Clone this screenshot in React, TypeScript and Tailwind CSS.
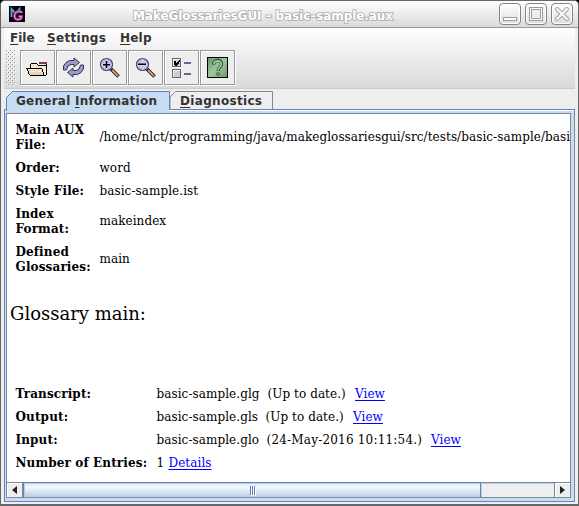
import type { ReactNode } from "react";

const SANS = "font-['DejaVu_Sans',sans-serif]";

function ToolButton({ children }: { children: ReactNode }) {
  return (
    <button className="flex h-[35px] w-[35px] shrink-0 items-center justify-center border border-[#999999] bg-[#eeeeee] pr-px pb-px shadow-[1px_1px_0_#ffffff,inset_1px_1px_0_#ffffff]">
      {children}
    </button>
  );
}

function FolderIcon() {
  return (
    <svg width="22" height="22" viewBox="0 -1 22 22" shapeRendering="crispEdges">
      <path d="M13 5h8v2h-8z" fill="#7a4242" />
      <path d="M4 7h7l2 1h7v10H5z" fill="#f7ead8" />
      <path d="M1 11h15l2 7H4z" fill="#ead2b4" />
      <path d="M2 12h14v1H3zM4 14h12v1H4z" fill="#fbf0de" />
      <path d="M5 6h6v1H5zM4 7h1v4H4zM11 7h1v1h-1zM12 8h8v1h-8zM0 11h16v1H0zM1 12h1v2H1zM2 14h1v3H2zM3 17h1v1H3zM4 18h16v1H4zM16 12h1v3h-1zM17 15h1v3h-1zM20 7h1v11h-1z" fill="#000" />
    </svg>
  );
}

function RefreshIcon() {
  return (
    <svg width="22" height="22" viewBox="0 0 22 22">
      <path d="M1.500 14V10L4 6.500L7.500 4.500H12V2L17.500 6.500L12 11V8.500H9L6 10L4.500 14Z" fill="#9999cc" stroke="#26263c" strokeWidth=".9" />
      <path d="M21.500 9V13L19 16.500L15.500 18.500H11V21L5.500 16.500L11 12V14.500H14L17 13L18.500 9Z" fill="#9999cc" stroke="#26263c" strokeWidth=".9" />
    </svg>
  );
}

function MagnifierIcon({ plus = false }: { plus?: boolean }) {
  return (
    <svg width="22" height="22" viewBox="0 0 22 22">
      <path d="M13 13l7.500 7.500" stroke="#1a1a1a" strokeWidth="3.600" />
      <path d="M14 14l6 6" stroke="#d99a69" strokeWidth="1.800" />
      <circle cx="8.500" cy="8.500" r="6" fill="#ccccee" stroke="#46466e" strokeWidth="1.200" />
      <path d="M5 6h1v1H5zM6 4h1v1H6zM10 4h1v1h-1zM12 6h1v1h-1zM5 11h1v1H5zM7 12h1v1H7zM10 12h1v1h-1zM12 10h1v1h-1z" fill="#9a9ac8" />
      <path d={plus ? "M5 8h7v1.500H5zM7.750 5h1.500v7h-1.500z" : "M4 7.500h8V9H4z"} fill="#000" />
    </svg>
  );
}

function OptionsIcon() {
  return (
    <svg width="22" height="22" viewBox="-1 0 22 22" shapeRendering="crispEdges">
      <path d="M1.500 2.500h8v8h-8zM1.500 13.500h8v8h-8z" fill="#cccccc" stroke="#666666" />
      <path d="M2 3h7v1H2zM2 3h1v7H2zM2 14h7v1H2zM2 14h1v7H2zM10 3h1v9h-1zM2 11h9v1H2z" fill="#f5f5f5" />
      <path d="M3 5h2v2h1V6h1V5h1V4h1v2H8v2H7v1H6v1H4V9H3z" fill="#000" />
      <path d="M13 6h7v2h-7zM13 17h7v2h-7z" fill="#666699" />
    </svg>
  );
}

function HelpIcon() {
  return (
    <svg width="22" height="22" viewBox="0 0 22 22">
      <defs>
        <linearGradient id="helpFill" x1="0" y1="0" x2="1" y2="1">
          <stop offset="0" stopColor="#699369" />
          <stop offset=".5" stopColor="#9cc89c" />
          <stop offset="1" stopColor="#6d946d" />
        </linearGradient>
      </defs>
      <rect x="1.500" y="1.500" width="20" height="20" fill="url(#helpFill)" stroke="#000" />
      <path d="M7.500 8.500C7.500 3 15.500 3 15.500 8C15.500 11 12 10.500 12 15" fill="none" stroke="#254a2c" strokeWidth="3.200" />
      <path d="M7.800 8C8 3.800 15.300 3.800 15.300 8C15.300 11 12 10.500 12 14.500" fill="none" stroke="#a1cda1" strokeWidth="1.700" />
      <circle cx="12" cy="18" r="1.400" fill="#a1cda1" stroke="#254a2c" strokeWidth=".8" />
    </svg>
  );
}

function AppIcon() {
  return (
    <svg width="16" height="16" viewBox="0 0 16 16">
      <rect width="16" height="16" fill="#050108" />
      <path d="M2.500 11V3L6.500 7.500L10.500 3V7" fill="none" stroke="#57a9bd" strokeWidth="1.900" />
      <path d="M13 7C12 4.500 5.500 5 5.500 10C5.500 15 12.500 14.500 12.500 10.500H9.500" fill="none" stroke="#7b2c75" strokeWidth="3" />
      <path d="M13 7C12 4.500 5.500 5 5.500 10C5.500 15 12.500 14.500 12.500 10.500H9.500" fill="none" stroke="#e583da" strokeWidth="1.400" />
    </svg>
  );
}

function WindowButton({ children }: { children: ReactNode }) {
  return (
    <button className="h-[22px] w-[22px] rounded-[4px] border border-[#858585] bg-linear-to-b from-white to-[#dedede] shadow-[inset_0_0_0_1px_#ffffff]">
      <svg width="20" height="20" viewBox="0 0 20 20" fill="none" stroke="#9c9c9c">
        {children}
      </svg>
    </button>
  );
}

function Row({ label, children, wide = false, tall = false }: { label: ReactNode; children: ReactNode; wide?: boolean; tall?: boolean }) {
  return (
    <div className="flex items-center py-1 pl-[8.5px]">
      <div className={`shrink-0 font-bold tracking-[0.130px] ${wide ? "w-[141px]" : "w-[84px]"}`}>{label}</div>
      <div className={`flex ${tall ? "pb-[2px]" : ""}`}>{children}</div>
    </div>
  );
}

function Link({ children }: { children: string }) {
  return <a className="text-[#0000ff] underline decoration-1 underline-offset-[1.500px]">{children}</a>;
}

function Menu({ k, rest, className }: { k: string; rest: string; className: string }) {
  return (
    <span className={className}>
      <span className="underline decoration-1 underline-offset-2">{k}</span>
      {rest}
    </span>
  );
}

export default function App() {
  return (
    <div className="h-[506px] w-[579px] overflow-hidden bg-black">
      <div className="flex h-[506px] w-[579px] flex-col overflow-hidden rounded-t-[5px] border border-b-2 border-[#666666] bg-[#eeeeee]">
        <header className="flex h-[27px] shrink-0 items-center border-b border-[#999999] bg-linear-to-b from-white to-[#dadada] pr-[5px] pl-2">
          <AppIcon />
          <h1 className={`ml-[108px] pt-[3px] text-[12px] leading-[16px] font-bold tracking-[-0.080px] whitespace-nowrap text-white [-webkit-text-stroke:1.700px_#adadad] [paint-order:stroke_fill] ${SANS}`}>
            MakeGlossariesGUI – basic–sample.aux
          </h1>
          <div className="ml-auto flex gap-1">
            <WindowButton>
              <rect x="3.500" y="13.500" width="13" height="3" fill="#fff" />
            </WindowButton>
            <WindowButton>
              <rect x="3.500" y="3.500" width="13" height="13" fill="#fff" />
              <rect x="5.500" y="5.500" width="9" height="9" fill="#eee" />
            </WindowButton>
            <WindowButton>
              <path d="M5.200 5.200l9.600 9.600M14.800 5.200l-9.600 9.600" strokeWidth="4.200" strokeLinecap="round" />
              <path d="M5.200 5.200l9.600 9.600M14.800 5.200l-9.600 9.600" stroke="#f7f7f7" strokeWidth="2.400" strokeLinecap="round" />
            </WindowButton>
          </div>
        </header>

        <div className="mr-[3px] ml-[3px] h-[61px] shrink-0 border-b border-[#cccccc] bg-linear-to-b from-white to-[#dadada] to-[59px]">
          <nav className={`flex h-[22px] pt-[2px] pl-[6px] text-[12px] leading-[16px] font-bold text-[#333333] ${SANS}`}>
            <Menu k="F" rest="ile" className="w-[37px]" />
            <Menu k="S" rest="ettings" className="w-[73px] tracking-[0.320px]" />
            <Menu k="H" rest="elp" className="tracking-[0.200px]" />
          </nav>
          <div className="flex h-[37px] gap-px border-b border-[#dadada] pl-[2px]">
            <svg width="13" height="36" shapeRendering="crispEdges">
              <defs>
                <pattern id="grip" width="4" height="4" patternUnits="userSpaceOnUse">
                  <path d="M0 0h1v1H0zM2 2h1v1H2z" fill="#8a929b" />
                  <path d="M1 1h1v1H1zM3 3h1v1H3z" fill="#fff" />
                </pattern>
              </defs>
              <rect width="10" height="36" fill="url(#grip)" />
            </svg>
            <ToolButton><FolderIcon /></ToolButton>
            <ToolButton><RefreshIcon /></ToolButton>
            <ToolButton><MagnifierIcon plus /></ToolButton>
            <ToolButton><MagnifierIcon /></ToolButton>
            <ToolButton><OptionsIcon /></ToolButton>
            <ToolButton><HelpIcon /></ToolButton>
          </div>
        </div>

        <div className={`relative z-10 ml-[4px] flex h-[20px] shrink-0 items-end text-[12px] leading-[16px] font-bold text-[#333333] ${SANS}`}>
          <div className="relative h-[18px] w-[165px] pt-[2px] pl-[11px] tracking-[0.240px]">
            <svg width="165" height="20" className="absolute top-0 left-0 -z-10">
              <path d="M1.500 21V6.500L7.500 .5H164.500V18.500H163.500V21" fill="#c8ddf2" stroke="#6382bf" />
              <path d="M2 18h162v2H2z" fill="#c8ddf2" />
            </svg>
            General <Menu k="I" rest="nformation" className="" />
          </div>
          <div className="relative h-[18px] w-[103px] pt-[2px] pl-[10px] tracking-[0.320px]">
            <svg width="103" height="18" className="absolute top-0 left-0 -z-10">
              <path d="M0 19V6L5.500 .5H102.500V19" fill="#eeeeee" stroke="#7a8a99" />
            </svg>
            <Menu k="D" rest="iagnostics" className="" />
          </div>
        </div>

        <div className="mr-[3px] ml-[3px] flex h-[393px] shrink-0 flex-col border border-[#6382bf] border-r-[#7a8a99] bg-[#c8ddf2] pt-[3px] pr-[3px] pb-[3px] pl-px shadow-[inset_0_1px_0_#ffffff]">
          <main className="flex min-h-0 flex-1 flex-col overflow-hidden border border-[#7a8a99] bg-white font-['DejaVu_Serif',serif] text-[12px] leading-[15px] whitespace-nowrap text-black">
            <div className="h-[368px] shrink-0 pt-[5px] tracking-[0.070px]">
              <Row tall label={<>Main AUX<br />File:</>}>/home/nlct/programming/java/makeglossariesgui/src/tests/basic-sample/basi</Row>
              <Row label="Order:">word</Row>
              <Row label="Style File:">basic-sample.ist</Row>
              <Row tall label={<>Index<br />Format:</>}>makeindex</Row>
              <Row tall label={<>Defined<br />Glossaries:</>}>main</Row>
              <h2 className="mt-[23px] mb-[57px] pl-[3px] text-[18px] leading-[24px] tracking-[0px]">Glossary main:</h2>
              <Row wide label="Transcript:"><span className="w-[111px]">basic-sample.glg</span><span className="w-[87.5px]">(Up to date.)</span><Link>View</Link></Row>
              <Row wide label="Output:"><span className="w-[109px]">basic-sample.gls</span><span className="w-[87.5px]">(Up to date.)</span><Link>View</Link></Row>
              <Row wide label="Input:"><span className="w-[110px]">basic-sample.glo</span><span className="w-[164.5px] tracking-[0.200px]">(24-May-2016 10:11:54.)</span><Link>View</Link></Row>
              <Row wide label="Number of Entries:"><span className="w-[12px]">1</span><Link>Details</Link></Row>
            </div>
            <div className="flex h-[15px] shrink-0 border-t border-[#7a8a99] bg-[#eeeeee]">
              <div className="flex w-[16px] items-center justify-center border-r border-[#7a8a99] shadow-[inset_1px_1px_0_#ffffff]">
                <svg width="5" height="8"><path d="M5 0v8L0 4z" fill="#222" /></svg>
              </div>
              <div className="-mt-px flex w-[458px] items-center justify-center gap-[1px] border-x border-t border-[#6382bf] bg-linear-to-b from-[#dfeaf5] via-[#f3f8fd] via-30% to-[#b8cfe5] shadow-[inset_1px_1px_0_#b8cfe5]">
                <span className="h-[9px] w-px bg-[#6382bf] shadow-[1px_1px_0_#ffffff]" />
                <span className="h-[9px] w-px bg-[#6382bf] shadow-[1px_1px_0_#ffffff]" />
                <span className="h-[9px] w-px bg-[#6382bf] shadow-[1px_1px_0_#ffffff]" />
              </div>
              <div className="flex-1 shadow-[inset_1px_1px_0_#b8cfe5]" />
              <div className="flex w-[16px] items-center justify-center border-l border-[#7a8a99] shadow-[inset_1px_1px_0_#ffffff]">
                <svg width="5" height="8"><path d="M0 0v8L5 4z" fill="#222" /></svg>
              </div>
            </div>
          </main>
        </div>
      </div>
    </div>
  );
}
